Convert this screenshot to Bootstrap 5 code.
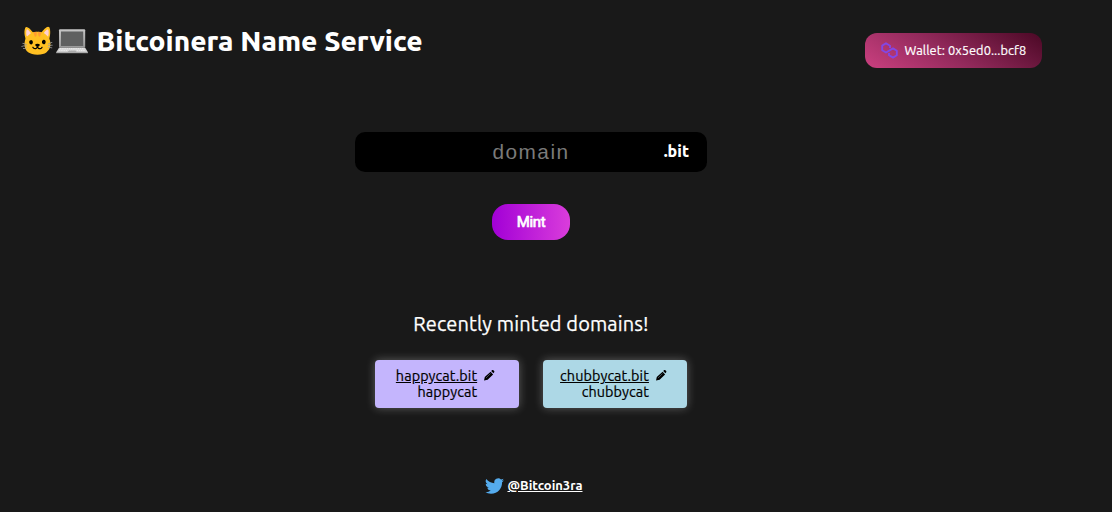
<!DOCTYPE html>
<html lang="en">
<head>
<meta charset="utf-8">
<meta name="viewport" content="width=device-width, initial-scale=1">
<title>Bitcoinera Name Service</title>
<link href="https://cdn.jsdelivr.net/npm/bootstrap@5.3.0/dist/css/bootstrap.min.css" rel="stylesheet">
<style>
body{background:#191919;color:#fff;font-family:Ubuntu,"Noto Sans",sans-serif;height:512px;overflow:hidden}
.page{width:1062px;height:512px}
.top{height:132px;padding:22px 20px 0 20px}
.brand-title{font-size:28px;font-weight:800;line-height:38px;white-space:nowrap}
.laptop{width:34.800px;height:30px;vertical-align:-6px}
.wallet{margin-top:11px;width:177px;height:35px;border-radius:12px;padding-left:16px;font-size:12.800px;letter-spacing:.05px;-webkit-text-stroke:.2px #fff;white-space:nowrap;background:linear-gradient(32deg,#cb4080 0%,#932a5c 45%,#4b0825 100%)}
.wallet svg{margin-right:6.500px}
.field{width:352px;height:40px;border-radius:10px;background:#000}
.field input{width:352px;height:40px;border:0;background:transparent;color:#fff;text-align:center;font:20.800px/40px "Liberation Sans",sans-serif;letter-spacing:1.500px;padding:0}
.field input::placeholder{color:#7a7a7a;opacity:1}
.tld{right:18px;top:0;line-height:38px;font-size:16px;font-weight:800}
.btn.mint{width:78px;height:36px;margin-top:32px;padding:0;border:0;border-radius:16px;color:#fff;font:400 15px/36px Roboto,"Liberation Sans",sans-serif;letter-spacing:-.3px;-webkit-text-stroke:.7px #fff;background:linear-gradient(90deg,#a200d6,#da3ddb)}
.recent{margin-top:69px;font-size:20px;line-height:30px;letter-spacing:.120px;-webkit-text-stroke:.25px #fff}
.mints{gap:24px;margin-top:21px}
.mint-item{width:144px;height:48px;border-radius:4px;padding:8px 3px 0 0;color:#000;font-size:14.400px;line-height:16px;letter-spacing:.080px;-webkit-text-stroke:.2px #000;box-shadow:0 0 10px rgba(255,255,255,.3)}
.mint-item a{color:#000}
.pen{margin:1px 0 0 7px}
.violet{background:#c4b5fd}.sky{background:#add8e6}
.foot{margin-top:67px;padding-left:5px;font-size:13px;line-height:20px;font-weight:700}
.foot svg{margin:0 3px 0 1px}
.foot a{color:#fff}
</style>
</head>
<body>
<main class="page d-flex flex-column align-items-center">
  <header class="top w-100 d-flex justify-content-between align-items-start">
    <div class="brand-title">🐱<svg class="laptop" viewBox="0 0 34.8 30">
        <defs><linearGradient id="lid" x2="0" y2="1"><stop stop-color="#c6c6c6"/><stop offset="1" stop-color="#979797"/></linearGradient></defs>
        <rect x="4" y="2.300" width="26.200" height="18.500" rx="1" fill="url(#lid)"/>
        <rect x="6" y="4.500" width="22.200" height="14.500" fill="#5f6060"/>
        <path d="M4 20.800h26.200l2.700 4.400H1.200z" fill="#d0d0d0"/><path d="M1.200 24.900h31.700v1.300H1.200z" fill="#aaa"/>
        <path d="M5 21.800h24.500M4 23.300h26.400" stroke="#f4f4f4" stroke-width=".9" stroke-dasharray="1.500 .7"/><path d="M13.500 23.500h7.400l.6 1.500h-8.600z" fill="#aaa"/>
      </svg> Bitcoinera Name Service</div>
    <div class="wallet d-flex align-items-center">
      <svg width="17" height="17" viewBox="0 0 17 17" fill="none" stroke="#8247e5" stroke-width="1.900" stroke-linejoin="round">
        <path d="M9 6V3.700L5 1.300 1.200 3.600v4.600L5 10.500l7-4.100 3.800 2.300v4.600L12 15.600 8 13.300V11"/>
      </svg>
      <span>Wallet: 0x5ed0...bcf8</span>
    </div>
  </header>
  <div class="field position-relative">
    <input type="text" placeholder="domain">
    <span class="tld position-absolute">.bit</span>
  </div>
  <button class="btn mint" type="button">Mint</button>
  <p class="recent mb-0">Recently minted domains!</p>
  <div class="mints d-flex">
    <div class="mint-item violet d-flex justify-content-center">
      <div class="text-end"><a href="#">happycat.bit</a><br>happycat</div>
      <svg class="pen" width="11" height="14" viewBox="0 0 11 14"><path d="M0 11.500l.8-3.500 5.800-5.300 2.500 2.700L3.600 10.700zM7.200 2.100l1-1q.6-.4 1.200.1l.8.900q.4.600 0 1.200l-.8.900z"/><path d="M2 9l4.500-4.500" stroke="#776e98" stroke-width=".6"/></svg>
    </div>
    <div class="mint-item sky d-flex justify-content-center">
      <div class="text-end"><a href="#">chubbycat.bit</a><br>chubbycat</div>
      <svg class="pen" width="11" height="14" viewBox="0 0 11 14"><path d="M0 11.500l.8-3.500 5.800-5.300 2.500 2.700L3.600 10.700zM7.200 2.100l1-1q.6-.4 1.200.1l.8.900q.4.600 0 1.200l-.8.900z"/><path d="M2 9l4.500-4.500" stroke="#68818a" stroke-width=".6"/></svg>
    </div>
  </div>
  <footer class="foot d-flex align-items-center">
    <svg width="19" height="19" viewBox="0 0 16 16" fill="#55acee"><path d="M5.026 15c6.038 0 9.341-5.003 9.341-9.334 0-.14 0-.282-.006-.422A6.685 6.685 0 0 0 16 3.542a6.658 6.658 0 0 1-1.889.518 3.301 3.301 0 0 0 1.447-1.817 6.533 6.533 0 0 1-2.087.793A3.286 3.286 0 0 0 7.875 6.030a9.325 9.325 0 0 1-6.767-3.429 3.289 3.289 0 0 0 1.018 4.382A3.323 3.323 0 0 1 .64 6.575v.045a3.288 3.288 0 0 0 2.632 3.218 3.203 3.203 0 0 1-.865.115 3.230 3.230 0 0 1-.614-.057 3.283 3.283 0 0 0 3.067 2.277A6.588 6.588 0 0 1 .78 13.580a6.320 6.320 0 0 1-.78-.045A9.344 9.344 0 0 0 5.026 15z"/></svg>
    <a href="#">@Bitcoin3ra</a>
  </footer>
</main>
<script src="https://cdn.jsdelivr.net/npm/bootstrap@5.3.0/dist/js/bootstrap.bundle.min.js"></script>
</body>
</html>
